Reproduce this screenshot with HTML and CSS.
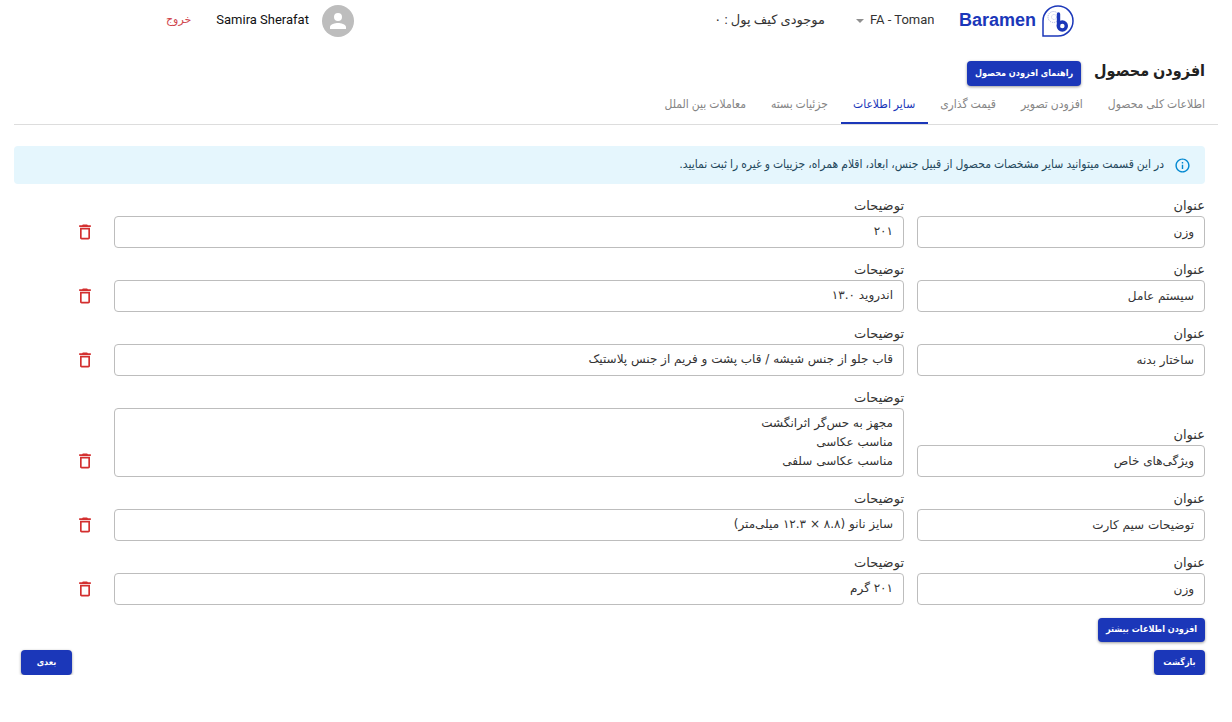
FILE: index.html
```html
<!DOCTYPE html>
<html lang="fa" dir="rtl">
<head>
<meta charset="utf-8">
<meta name="viewport" content="width=device-width, initial-scale=1">
<title>افزودن محصول</title>
<link rel="stylesheet" href="styles.css">
</head>
<body>
<svg class="sprite" aria-hidden="true">
  <symbol id="trash" viewBox="0 0 24 24"><path d="M6 19c0 1.100.9 2 2 2h8c1.100 0 2-.9 2-2V7H6v12zM8 9h8v10H8V9zm7.500-5l-1-1h-5l-1 1H5v2h14V4h-3.500z"/></symbol>
</svg>
<header class="topbar">
  <a class="brand" href="#">
    <svg class="brand-mark" viewBox="0 0 32 32" aria-hidden="true">
      <path d="M1 31V16A15 15 0 1 1 16 31Z" fill="none" stroke="#1b37b9" stroke-width="1.500"/>
      <circle cx="11.500" cy="12" r="5.500" fill="none" stroke="#a9b3e2" stroke-width="1" stroke-dasharray="1.200 1"/>
      <circle cx="12" cy="12" r="2.500" fill="none" stroke="#c3caec" stroke-width="1" stroke-dasharray="1.200 .8"/>
      <path d="M16.500 9V21" fill="none" stroke="#1b37b9" stroke-width="3.400" stroke-linecap="round"/>
      <circle cx="20.300" cy="21" r="4" fill="none" stroke="#1b37b9" stroke-width="3.400"/>
    </svg>
    <span class="brand-name">Baramen</span>
  </a>
  <div class="currency">
    <select class="currency-select" aria-label="ارز" dir="ltr"><option>FA - Toman</option></select>
    <svg class="caret" viewBox="0 0 8 4" aria-hidden="true"><path d="M0 0h8L4 4z"/></svg>
  </div>
  <p class="wallet">موجودی کیف پول : ۰</p>
  <div class="user">
    <svg class="avatar" viewBox="0 0 32 32" aria-hidden="true">
      <circle cx="16" cy="16" r="16" fill="#bdbdbd"/>
      <path d="M16 16a4 4 0 1 0 0-8 4 4 0 0 0 0 8zm0 2c-2.670 0-8 1.340-8 4v2h16v-2c0-2.660-5.330-4-8-4z" fill="#fff"/>
    </svg>
    <span class="user-name" dir="ltr">Samira Sherafat</span>
  </div>
  <a class="logout" href="#">خروج</a>
</header>

<main class="page">
  <div class="title-row">
    <h1 class="title">افزودن محصول</h1>
    <button class="btn" type="button">راهنمای افزودن محصول</button>
  </div>
  <nav class="tabs">
    <a class="tab" href="#">اطلاعات کلی محصول</a>
    <a class="tab" href="#">افزودن تصویر</a>
    <a class="tab" href="#">قیمت گذاری</a>
    <a class="tab tab-active" href="#" aria-current="page">سایر اطلاعات</a>
    <a class="tab" href="#">جزئیات بسته</a>
    <a class="tab" href="#">معاملات بین الملل</a>
  </nav>

  <div class="notice">
    <svg class="notice-icon" viewBox="0 0 24 24" aria-hidden="true"><path d="M11 7h2v2h-2zm0 4h2v6h-2zm1-9C6.480 2 2 6.480 2 12s4.480 10 10 10 10-4.480 10-10S17.520 2 12 2zm0 18c-4.410 0-8-3.590-8-8s3.590-8 8-8 8 3.590 8 8-3.590 8-8 8z"/></svg>
    <p class="notice-text">در این قسمت میتوانید سایر مشخصات محصول از قبیل جنس، ابعاد، اقلام همراه، جزییات و غیره را ثبت نمایید.</p>
  </div>

  <form class="specs">
    <div class="spec">
      <div class="cell"><label class="label" for="t1">عنوان</label><input class="field" id="t1" value="وزن"></div>
      <div class="cell"><label class="label" for="d1">توضیحات</label><textarea class="field" id="d1" rows="1">۲۰۱</textarea></div>
      <div class="cell"><button class="remove" type="button" aria-label="حذف"><svg class="remove-icon"><use href="#trash"/></svg></button></div>
    </div>
    <div class="spec">
      <div class="cell"><label class="label" for="t2">عنوان</label><input class="field" id="t2" value="سیستم عامل"></div>
      <div class="cell"><label class="label" for="d2">توضیحات</label><textarea class="field" id="d2" rows="1">اندروید ۱۳.۰</textarea></div>
      <div class="cell"><button class="remove" type="button" aria-label="حذف"><svg class="remove-icon"><use href="#trash"/></svg></button></div>
    </div>
    <div class="spec">
      <div class="cell"><label class="label" for="t3">عنوان</label><input class="field" id="t3" value="ساختار بدنه"></div>
      <div class="cell"><label class="label" for="d3">توضیحات</label><textarea class="field" id="d3" rows="1">قاب جلو از جنس شیشه / قاب پشت و فریم از جنس پلاستیک</textarea></div>
      <div class="cell"><button class="remove" type="button" aria-label="حذف"><svg class="remove-icon"><use href="#trash"/></svg></button></div>
    </div>
    <div class="spec">
      <div class="cell"><label class="label" for="t4">عنوان</label><input class="field" id="t4" value="ویژگی‌های خاص"></div>
      <div class="cell"><label class="label" for="d4">توضیحات</label><textarea class="field" id="d4" rows="3">مجهز به حس‌گر اثرانگشت
مناسب عکاسی
مناسب عکاسی سلفی</textarea></div>
      <div class="cell"><button class="remove" type="button" aria-label="حذف"><svg class="remove-icon"><use href="#trash"/></svg></button></div>
    </div>
    <div class="spec">
      <div class="cell"><label class="label" for="t5">عنوان</label><input class="field" id="t5" value="توضیحات سیم کارت"></div>
      <div class="cell"><label class="label" for="d5">توضیحات</label><textarea class="field" id="d5" rows="1">سایز نانو (۸.۸ × ۱۲.۳ میلی‌متر)</textarea></div>
      <div class="cell"><button class="remove" type="button" aria-label="حذف"><svg class="remove-icon"><use href="#trash"/></svg></button></div>
    </div>
    <div class="spec">
      <div class="cell"><label class="label" for="t6">عنوان</label><input class="field" id="t6" value="وزن"></div>
      <div class="cell"><label class="label" for="d6">توضیحات</label><textarea class="field" id="d6" rows="1">۲۰۱ گرم</textarea></div>
      <div class="cell"><button class="remove" type="button" aria-label="حذف"><svg class="remove-icon"><use href="#trash"/></svg></button></div>
    </div>
    <button class="btn add-more" type="button">افزودن اطلاعات بیشتر</button>
    <div class="steps">
      <button class="btn btn-step" type="button">بازگشت</button>
      <button class="btn btn-step" type="button">بعدی</button>
    </div>
  </form>
</main>
</body>
</html>
```
FILE: styles.css
```css
* { box-sizing: border-box; }
body {
  margin: 0;
  background: #fff;
  color: #333;
  font-family: Roboto, "DejaVu Sans", sans-serif;
  font-size: 12px;
}
.sprite { position: absolute; width: 0; height: 0; }
p, h1 { margin: 0; }
a { text-decoration: none; }

.topbar {
  display: flex;
  align-items: center;
  padding: 5px 158px 0 166px;
  line-height: 20px;
}
.brand { display: flex; align-items: center; gap: 6px; }
.brand-mark { width: 32px; height: 32px; }
.brand-name {
  padding-bottom: 2px;
  color: #1b37b9;
  font: bold 18px/30px "Liberation Sans", sans-serif;
}
.currency {
  position: relative;
  margin-right: 25px;
  padding-bottom: 2px;
}
.currency-select {
  appearance: none;
  display: block;
  width: 78px;
  padding: 0 0 0 14px;
  border: 0;
  background: none;
  color: #333;
  font: 13px/20px Roboto, sans-serif;
}
.caret {
  position: absolute;
  left: 0;
  top: 9px;
  width: 8px;
  height: 4px;
  fill: #8f8f8f;
}
.wallet { margin-right: 31px; padding-bottom: 2px; font-size: 13px; }
.user {
  display: flex;
  align-items: center;
  gap: 13px;
  margin-right: auto;
}
.avatar { width: 32px; height: 32px; }
.user-name { padding-bottom: 2px; color: #111; font-size: 13px; }
.logout { margin-right: 25px; padding-bottom: 2px; color: #d0454c; font-size: 11px; }

.page { padding: 0 14px; }
.title-row {
  display: flex;
  align-items: center;
  gap: 13px;
  padding: 24px 13px 0 0;
}
.title {
  padding-bottom: 5px;
  color: #222;
  font-family: Roboto, "DejaVu Sans Condensed", "DejaVu Sans", sans-serif;
  font-size: 16px;
  font-weight: bold;
  line-height: 20px;
}
.btn {
  height: 25px;
  padding: 0 8px 2px;
  border: 0;
  border-radius: 4px;
  background: #1b37b9;
  box-shadow: 0 1px 3px rgba(0, 0, 0, .4);
  color: #fff;
  font-family: "DejaVu Sans Condensed", "DejaVu Sans", sans-serif;
  font-size: 9px;
  font-weight: bold;
  line-height: 20px;
}
.tabs {
  display: flex;
  border-bottom: 1px solid #ddd;
}
.tab {
  height: 38px;
  padding: 0 13px 0 12px;
  border-bottom: 2px solid transparent;
  color: #858585;
  font-family: Roboto, "DejaVu Sans Condensed", "DejaVu Sans", sans-serif;
  font-size: 12px;
  line-height: 36px;
}
.tab-active { border-color: #1b37b9; color: #1b37b9; }

.notice {
  display: flex;
  align-items: center;
  gap: 10px;
  height: 38px;
  margin: 21px 13px 14px 0;
  padding: 0 14px;
  border-radius: 4px;
  background: #e5f6fd;
}
.notice-icon { width: 17px; height: 17px; fill: #0288d1; }
.notice-text {
  padding-bottom: 2px;
  color: #24485c;
  font-family: Roboto, "DejaVu Sans Condensed", "DejaVu Sans", sans-serif;
  font-size: 12px;
}

.spec {
  display: grid;
  grid-template-columns: 3fr 8fr 1fr;
  align-items: end;
  margin-bottom: 14px;
}
.cell {
  display: flex;
  flex-direction: column;
  align-items: start;
  padding-right: 13px;
}
.label { padding-bottom: 2px; font-size: 13px; line-height: 16px; }
.field {
  display: block;
  width: 100%;
  min-height: 32px;
  padding: 5px 10px;
  border: 1px solid #bdbdbd;
  border-radius: 4px;
  background: #fff;
  color: #333;
  font-family: "DejaVu Sans", sans-serif;
  font-size: 12px;
  line-height: 19px;
  resize: none;
  overflow: hidden;
}
.remove {
  display: flex;
  width: 32px;
  height: 32px;
  padding: 6px;
  border: 0;
  background: none;
}
.remove-icon { width: 20px; height: 20px; fill: #d32f2f; }
.add-more { display: block; height: 24px; margin: -1px 13px 0 0; }
.steps {
  display: flex;
  justify-content: space-between;
  padding: 8px 13px 0 7px;
}
.btn-step { min-width: 51px; }
```
